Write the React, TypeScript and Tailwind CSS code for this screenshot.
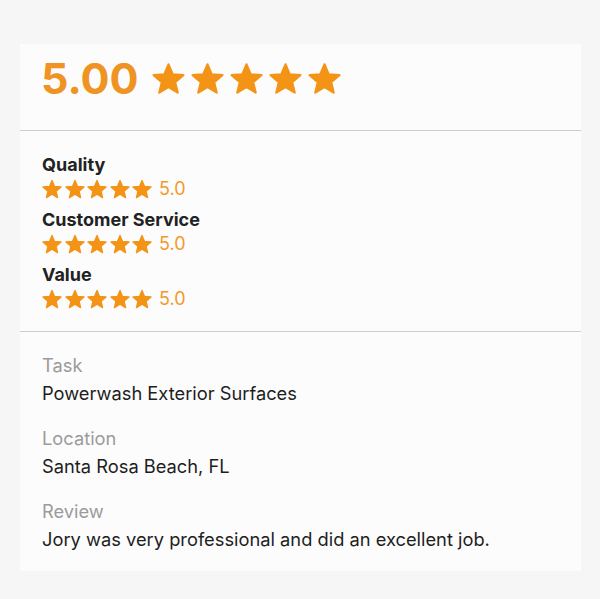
const starPoints = (() => {
  const R = 11.4
  const r = R * 0.45
  const cx = 12
  const cy = (24 - 1.809 * R) / 2 + R
  const pts: string[] = []
  for (let i = 0; i < 10; i++) {
    const rad = i % 2 === 0 ? R : r
    const a = ((-90 + i * 36) * Math.PI) / 180
    pts.push(`${(cx + rad * Math.cos(a)).toFixed(2)},${(cy + rad * Math.sin(a)).toFixed(2)}`)
  }
  return pts.join(' ')
})()

const Star = ({ className }: { className: string }) => (
  <svg viewBox="0 0 24 24" className={className}>
    <polygon points={starPoints} fill="#f39417" stroke="#f39417" strokeWidth={1.6} strokeLinejoin="round" />
  </svg>
)

const Stars = ({ size }: { size: 'lg' | 'sm' }) => (
  <div className={size === 'lg' ? 'flex items-center gap-[6px]' : 'flex items-center gap-[2.5px]'}>
    {[0, 1, 2, 3, 4].map((i) => (
      <Star key={i} className={size === 'lg' ? 'w-[33px] h-[33px]' : 'w-[20px] h-[20px]'} />
    ))}
  </div>
)

const ratings = ['Quality', 'Customer Service', 'Value']

const details = [
  { label: 'Task', value: 'Powerwash Exterior Surfaces' },
  { label: 'Location', value: 'Santa Rosa Beach, FL' },
  { label: 'Review', value: 'Jory was very professional and did an excellent job.' },
]

export default function App() {
  return (
    <div className="min-h-screen bg-[#f6f6f6] pt-[44px] pl-[20px] pr-[19px] font-['Inter',sans-serif]">
      <div className="bg-[#fcfcfc]">
        <div className="flex items-center gap-[13px] pl-[21px] pt-[13px] pb-[30px]">
          <span className="text-[43px] leading-[43px] font-bold text-[#ef9322]">5.00</span>
          <Stars size="lg" />
        </div>
        <div className="h-px bg-[#cdcdcd]" />
        <div className="flex flex-col gap-[7px] pl-[22px] pt-[22px] pb-[20px]">
          {ratings.map((label) => (
            <div key={label}>
              <div className="text-[18px] leading-[24px] font-bold text-[#222]">{label}</div>
              <div className="flex items-center h-[24px] gap-[7px]">
                <Stars size="sm" />
                <span className="text-[18px] leading-[24px] text-[#f19a2c]">5.0</span>
              </div>
            </div>
          ))}
        </div>
        <div className="h-px bg-[#cdcdcd]" />
        <div className="flex flex-col gap-[17px] pl-[22px] pt-[19px] pb-[18px]">
          {details.map((d) => (
            <div key={d.label}>
              <div className="text-[18.3px] leading-[28px] text-[#9b9b9b]">{d.label}</div>
              <div className="text-[18.3px] leading-[28px] text-[#1e1e1e]">{d.value}</div>
            </div>
          ))}
        </div>
      </div>
    </div>
  )
}
